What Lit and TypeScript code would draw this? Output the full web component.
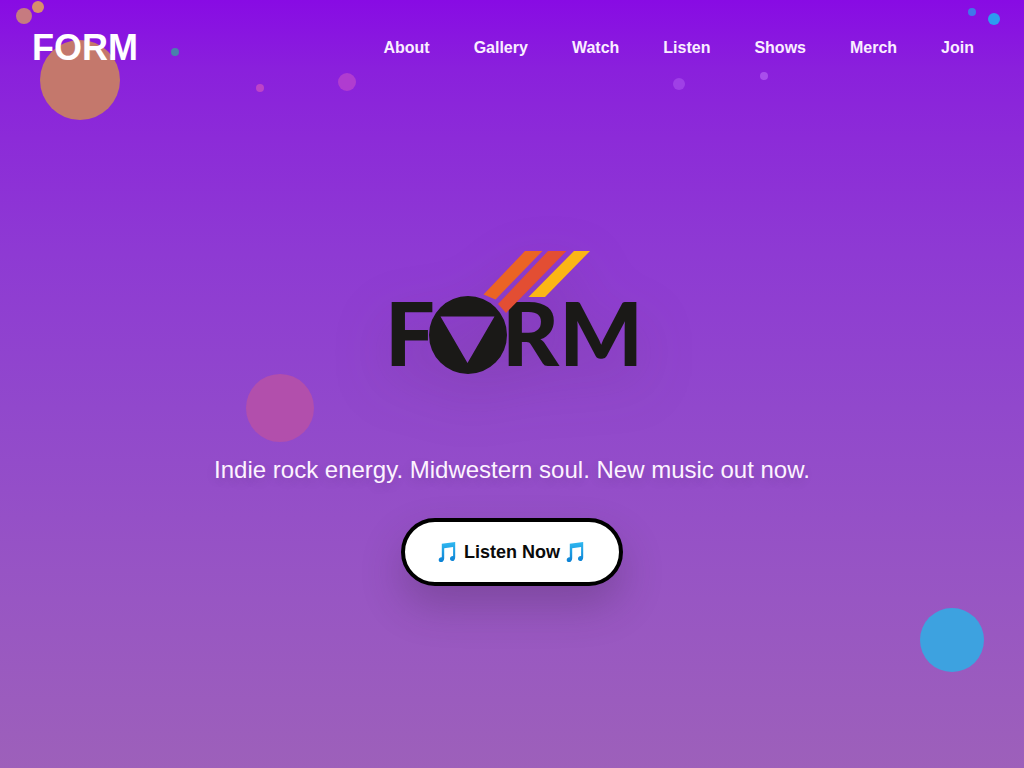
import { LitElement, html, css, svg } from "lit";
import { customElement } from "lit/decorators.js";

const LINKS = ["About", "Gallery", "Watch", "Listen", "Shows", "Merch", "Join"];
const DOTS = ["sun", "rose", "sky", "d1", "d2", "d3", "d4", "d5", "d6", "d7", "d8", "d9"];

const note = (id: string) => html`
  <svg class="note" viewBox="0 0 22 22" aria-hidden="true">
    <defs>
      <linearGradient id=${id} x1="0" y1="0" x2="0" y2="1">
        <stop offset="0" stop-color="#2fb8f0" />
        <stop offset="1" stop-color="#0b80d4" />
      </linearGradient>
    </defs>
    ${svg`<path fill="url(#${id})" d="M4.800 2.700 18.200 1v15.200c0 2.400-1.200 3.900-2.900 3.900-1.500 0-2.400-1-2.300-2.500.1-1.600 1.400-2.800 3.100-2.600V6L7.200 7.300v9.900c0 2.400-1.400 3.900-3.200 3.900-1.500 0-2.400-1.100-2.300-2.400.1-1.600 1.400-2.700 3.100-2.500z"/>`}
  </svg>`;

@customElement("app-root")
export class AppRoot extends LitElement {
  static styles = css`
    :host {
      display: block;
      font-family: "Liberation Sans", Arial, sans-serif;
      color: #fff;
    }
    .page {
      position: relative;
      display: grid;
      min-height: 100vh;
      overflow: hidden;
      background: linear-gradient(
        #880be4 0%,
        #8a20dc 9%,
        #8c2bd8 18%,
        #8e3ad3 33%,
        #9148cc 53%,
        #9856c3 78%,
        #9d60ba 100%
      );
    }
    .header {
      grid-area: 1 / 1;
      align-self: start;
      z-index: 2;
      display: flex;
      flex-wrap: wrap;
      align-items: center;
      justify-content: space-between;
      padding: 24px 32px;
    }
    .brand {
      font-size: 36px;
      line-height: 48px;
      font-weight: 700;
      color: #fff;
      text-decoration: none;
    }
    .nav {
      display: flex;
      flex-wrap: wrap;
      gap: 8px;
    }
    .link {
      padding: 8px 18px;
      font-size: 16px;
      line-height: 20px;
      font-weight: 700;
      color: #faeeff;
      text-decoration: none;
    }
    .hero {
      grid-area: 1 / 1;
      z-index: 1;
      display: flex;
      flex-direction: column;
      align-items: center;
      justify-content: center;
      text-align: center;
    }
    .logo {
      width: 242px;
      padding: 68px 0;
      overflow: visible;
      filter: drop-shadow(0 20px 28px rgba(80, 50, 70, 0.2));
    }
    .letter {
      font-family: Lato, "Liberation Sans", sans-serif;
      font-size: 88px;
      font-weight: 900;
    }
    .tagline {
      margin: 12px 16px 32px;
      font-size: 24px;
      line-height: 32px;
      font-weight: 400;
      color: #fdf3ff;
      text-shadow: 0 4px 12px rgba(0, 0, 0, 0.12);
    }
    .cta {
      display: flex;
      align-items: center;
      gap: 5px;
      padding: 19px 32px;
      border: 4px solid #000;
      border-radius: 40px;
      background: #fff;
      color: #0a0a0a;
      font-family: inherit;
      font-size: 18px;
      line-height: 22px;
      font-weight: 700;
      cursor: pointer;
      box-shadow: 0 20px 40px rgba(60, 40, 70, 0.28);
    }
    .note {
      width: 22px;
      height: 22px;
    }
    .dot {
      position: absolute;
      border-radius: 50%;
    }
    .sun { left: 40px; top: 40px; width: 80px; height: 80px; background: #c4786c; }
    .rose { left: 24%; top: 374px; width: 68px; height: 68px; background: #b24fac; }
    .sky { right: 40px; bottom: 96px; width: 64px; height: 64px; background: #3da2e0; }
    .d1 { left: 16px; top: 8px; width: 16px; height: 16px; background: #c67b80; }
    .d2 { left: 32px; top: 1px; width: 12px; height: 12px; background: #d88e6c; }
    .d3 { left: 171px; top: 48px; width: 8px; height: 8px; background: #4a80ac; }
    .d4 { left: 25%; top: 84px; width: 8px; height: 8px; background: #bd43c8; }
    .d5 { left: 33%; top: 73px; width: 18px; height: 18px; background: #b03cd0; }
    .d6 { right: 339px; top: 78px; width: 12px; height: 12px; background: #9f40e6; }
    .d7 { right: 256px; top: 72px; width: 8px; height: 8px; background: #a94eec; }
    .d8 { right: 48px; top: 8px; width: 8px; height: 8px; background: #4176ea; }
    .d9 { right: 24px; top: 13px; width: 12px; height: 12px; background: #2d9bf0; }
  `;

  render() {
    return html`
      <div class="page">
        ${DOTS.map((name) => html`<span class="dot ${name}"></span>`)}
        <header class="header">
          <a class="brand" href="#home">FORM</a>
          <nav class="nav">
            ${LINKS.map((l) => html`<a class="link" href="#${l.toLowerCase()}">${l}</a>`)}
          </nav>
        </header>
        <main class="hero">
          <svg class="logo" viewBox="391 250 242 124" role="img" aria-label="FORM">
            <g fill="#1a1917">
              <text class="letter" x="385" y="366">F</text>
              <path
                fill-rule="evenodd"
                d="M468 296a39 39 0 1 1 0 78 39 39 0 0 1 0-78zM440.500 316.500 467.500 363 494.500 316.500z"
              />
              <text class="letter" x="502" y="366">RM</text>
            </g>
            <path fill="#eb6424" d="M525 251H542.500L495.500 299.500 483.500 294.500z" />
            <path fill="#e34e33" d="M548 251H566.500L506 313 498 304z" />
            <path fill="#fbb615" d="M574 251H590L545 297H528.500z" />
          </svg>
          <p class="tagline">Indie rock energy. Midwestern soul. New music out now.</p>
          <button class="cta" type="button">${note("note-a")}<span>Listen Now</span>${note("note-b")}</button>
        </main>
      </div>
    `;
  }
}
